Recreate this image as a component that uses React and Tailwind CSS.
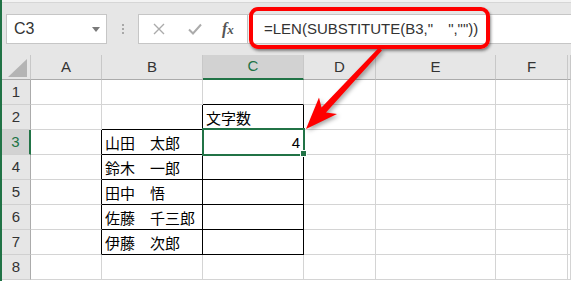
import React from 'react';

const columns = ['A', 'B', 'C', 'D', 'E', 'F', ''];
const colWidths = ['w-[71px]', 'w-[101px]', 'w-[101px]', 'w-[72px]', 'w-[120px]', 'w-[72px]', 'flex-1'];

// cell contents + which edges get the black table border
const rows = [
  { n: 1, cells: [{}, {}, { bb: true }, {}, {}, {}, {}] },
  { n: 2, cells: [{}, { br: true, bb: true }, { text: '文字数', br: true, bb: true }, {}, {}, {}, {}] },
  { n: 3, cells: [{ br: true }, { text: '山田　太郎', br: true, bb: true }, { num: '4', br: true, bb: true, active: true }, {}, {}, {}, {}] },
  { n: 4, cells: [{ br: true }, { text: '鈴木　一郎', br: true, bb: true }, { br: true, bb: true }, {}, {}, {}, {}] },
  { n: 5, cells: [{ br: true }, { text: '田中　悟', br: true, bb: true }, { br: true, bb: true }, {}, {}, {}, {}] },
  { n: 6, cells: [{ br: true }, { text: '佐藤　千三郎', br: true, bb: true }, { br: true, bb: true }, {}, {}, {}, {}] },
  { n: 7, cells: [{ br: true }, { text: '伊藤　次郎', br: true, bb: true }, { br: true, bb: true }, {}, {}, {}, {}] },
  { n: 8, cells: [{}, {}, {}, {}, {}, {}, {}] },
];

const Cell = ({ cell, width }) => {
  const right = cell.br ? 'border-r-black' : 'border-r-[#d4d4d4]';
  const bottom = cell.bb ? 'border-b-black' : 'border-b-[#d4d4d4]';
  return (
    <div className={`relative h-[25px] shrink-0 ${width} border-r border-b ${right} ${bottom} flex items-center text-[15px] text-black`}>
      {cell.text && (
        <span className="pl-[3px] font-['Noto_Sans_CJK_JP',sans-serif] leading-none">{cell.text}</span>
      )}
      {cell.num && (
        <span className="ml-auto pr-[3px] font-['Liberation_Sans',sans-serif] leading-none">{cell.num}</span>
      )}
      {cell.active && (
        <>
          <div className="absolute z-10 -left-px -top-[2px] w-[103px] h-[28px] border-2 border-[#217346]" />
          <div className="absolute z-10 left-[97px] top-[20px] w-[7px] h-[7px] bg-[#217346] border border-white" />
        </>
      )}
    </div>
  );
};

export default function App() {
  return (
    <div className="relative w-[571px] h-[281px] overflow-hidden bg-white border-l-2 border-[#217346] font-['Liberation_Sans',sans-serif]">
      {/* formula bar */}
      <div className="h-[3px] bg-[#f3f3f3] border-b border-[#d6d6d6]" />
      <div className="h-[52px] bg-[#e6e6e6] flex items-center pt-[11px] pb-[11px]">
        <div className="ml-[4px] w-[101px] h-[30px] bg-white border border-[#c6c6c6] flex items-center pl-[7px] pr-[6px]">
          <span className="text-[16px] text-[#333]">C3</span>
          <svg className="ml-auto" width="8" height="5" viewBox="0 0 8 5">
            <path d="M0 0h8L4 5z" fill="#7a7a7a" />
          </svg>
        </div>
        <div className="w-[31px] flex flex-col items-center gap-[2px]">
          <span className="w-[2px] h-[2px] bg-[#a8a8a8]" />
          <span className="w-[2px] h-[2px] bg-[#a8a8a8]" />
          <span className="w-[2px] h-[2px] bg-[#a8a8a8]" />
        </div>
        <div className="w-[110px] h-[30px] bg-white border border-[#c6c6c6] flex items-center">
          <svg className="ml-[14px]" width="12" height="12" viewBox="0 0 12 12">
            <path d="M1 1l10 10M11 1L1 11" stroke="#ababab" strokeWidth="1.4" fill="none" />
          </svg>
          <svg className="ml-[23px]" width="14" height="12" viewBox="0 0 14 12">
            <path d="M1 6.5l4 4L13 1.5" stroke="#ababab" strokeWidth="2" fill="none" />
          </svg>
          <span className="ml-[20px] font-['Liberation_Serif',serif] italic font-bold text-[16px] text-[#555] leading-none">
            f<span className="text-[13px]">x</span>
          </span>
        </div>
        <div className="flex-1 h-[30px] bg-white border-y border-[#c6c6c6] flex items-center pl-[16px]">
          <span className="text-[15px] text-[#333] whitespace-pre">
            =LEN(SUBSTITUTE(B3,"<span className="font-['Noto_Sans_CJK_JP',sans-serif]">　</span>",""))
          </span>
        </div>
      </div>

      {/* column headers */}
      <div className="flex h-[25px]">
        <div className="relative w-[29px] h-[25px] shrink-0 bg-[#e6e6e6] border-r border-b border-r-[#c8c8c8] border-b-[#ababab]">
          <svg className="absolute left-[6px] top-[4px]" width="19" height="18" viewBox="0 0 19 18">
            <path d="M19 0V18H0z" fill="#b4b4b4" />
          </svg>
        </div>
        {columns.map((c, i) => (
          <div
            key={i}
            className={`h-[25px] shrink-0 ${colWidths[i]} border-r border-r-[#c8c8c8] flex items-center justify-center text-[15px] ${
              c === 'C'
                ? 'bg-[#d2d2d2] text-[#217346] border-b-2 border-b-[#217346]'
                : 'bg-[#e6e6e6] text-[#333] border-b border-b-[#ababab]'
            }`}
          >
            {c}
          </div>
        ))}
      </div>

      {/* rows */}
      {rows.map((r) => (
        <div key={r.n} className="flex">
          <div
            className={`w-[29px] h-[25px] shrink-0 border-b border-b-[#d0d0d0] flex items-center justify-center text-[15px] ${
              r.n === 3
                ? 'bg-[#d2d2d2] text-[#217346] border-r-2 border-r-[#217346]'
                : 'bg-[#e6e6e6] text-[#333] border-r border-r-[#ababab]'
            }`}
          >
            {r.n}
          </div>
          {r.cells.map((cell, i) => (
            <Cell key={i} cell={cell} width={colWidths[i]} />
          ))}
        </div>
      ))}

      {/* callout frame around the formula */}
      <div className="absolute z-20 left-[247px] top-[7px] w-[241px] h-[42px] border-4 border-[#ff0000] rounded-[9px] shadow-[1px_2px_3px_rgba(0,0,0,0.45)]" />

      {/* arrow from the callout to C3 */}
      <svg className="absolute z-20 left-0 top-0 pointer-events-none drop-shadow-[2px_2px_2px_rgba(0,0,0,0.35)]" width="571" height="281" viewBox="0 0 571 281">
        <polygon
          points="377,47.5 380,50.5 324,112.5 335,114 304,129 317,97.5 319.5,107.5"
          fill="#ff0000"
        />
      </svg>
    </div>
  );
}
